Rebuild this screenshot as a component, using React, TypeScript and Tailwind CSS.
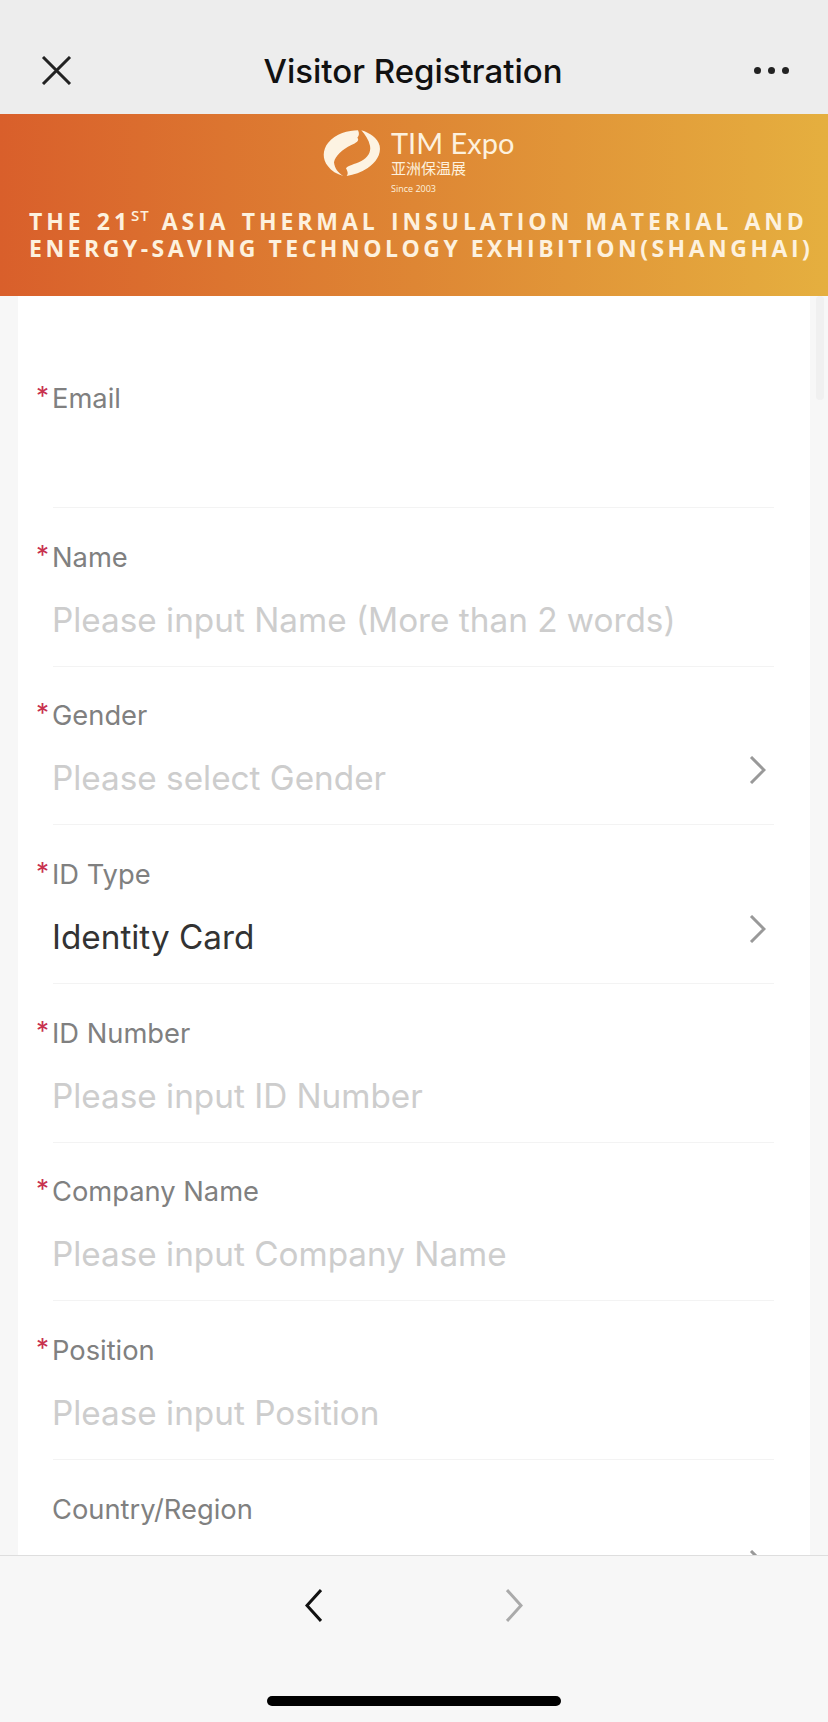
type Field = {
  label: string;
  required?: boolean;
  value?: string;
  placeholder?: string;
  select?: boolean;
};

const fields: Field[] = [
  { label: "Email", required: true },
  { label: "Name", required: true, placeholder: "Please input Name (More than 2 words)" },
  { label: "Gender", required: true, placeholder: "Please select Gender", select: true },
  { label: "ID Type", required: true, value: "Identity Card", select: true },
  { label: "ID Number", required: true, placeholder: "Please input ID Number" },
  { label: "Company Name", required: true, placeholder: "Please input Company Name" },
  { label: "Position", required: true, placeholder: "Please input Position" },
  { label: "Country/Region", select: true },
];

function Logo() {
  return (
    <svg width="60" height="48" viewBox="20 12 180 144" className="shrink-0">
      <path
        d="M128 16C100 16 60 26 38 54C22 74 20 102 38 124C48 138 64 148 84 153C68 144 58 130 56 112C60 92 80 74 108 60C122 54 134 46 126 38C132 32 132 24 128 16Z"
        fill="#fdf3e2"
      />
      <path
        d="M138 16C164 24 186 38 193 62C198 88 182 112 156 130C138 142 116 150 94 153C100 146 96 138 92 130C96 122 118 118 138 108C156 98 168 82 164 62C160 44 150 30 138 16Z"
        fill="#fdf3e2"
      />
    </svg>
  );
}

function Banner() {
  return (
    <div className="h-[182px] shrink-0 bg-gradient-to-r from-[#d95f2b] via-[#de8634] to-[#e5af3f] pt-[15px] text-[#fdf1de] font-['Open_Sans',sans-serif]">
      <div className="flex h-[79px] gap-[9px] pl-[322px]">
        <Logo />
        <div className="flex flex-col pt-[2px]">
          <div className="whitespace-nowrap text-[29px] leading-[24px] font-['Lato',sans-serif]">TIM Expo</div>
          <div className="mt-[5px] whitespace-nowrap text-[15px] leading-[16px] font-['Noto_Sans_CJK_SC',sans-serif]">
            亚洲保温展
          </div>
          <div className="mt-[7px] whitespace-nowrap text-[9px] leading-[12px]">Since 2003</div>
        </div>
      </div>
      <div className="whitespace-nowrap pl-[29px] text-[23px] leading-[27px] font-bold">
        <div className="flex h-[27px] tracking-[3.9px] [word-spacing:2.5px]">
          <span>THE 21</span>
          <span className="text-[15px] leading-[15px] font-semibold tracking-[1px]">ST</span>
          <span className="ml-[12px]">ASIA THERMAL INSULATION MATERIAL AND</span>
        </div>
        <div className="tracking-[3.5px]">ENERGY-SAVING TECHNOLOGY EXHIBITION(SHANGHAI)</div>
      </div>
    </div>
  );
}

export default function App() {
  return (
    <div className="flex h-[1722px] w-[828px] flex-col overflow-hidden bg-[#f7f7f7] font-['Inter',sans-serif]">
      <header className="flex h-[114px] shrink-0 items-center justify-between bg-[#ededed] pl-[41px] pr-[39px] pt-[27px]">
        <svg width="31" height="29" viewBox="0 0 31 29" fill="none" stroke="#222" strokeWidth="3">
          <path d="M2 1L29 28M29 1L2 28" />
        </svg>
        <h1 className="text-[33px] font-medium leading-[40px] text-[#111]">Visitor Registration</h1>
        <div className="flex gap-[7px]">
          <span className="h-[7px] w-[7px] rounded-full bg-[#222]" />
          <span className="h-[7px] w-[7px] rounded-full bg-[#222]" />
          <span className="h-[7px] w-[7px] rounded-full bg-[#222]" />
        </div>
      </header>

      <Banner />

      <main className="relative min-h-0 flex-1 overflow-hidden px-[18px]">
        <div className="h-full bg-white pt-[88px]">
          {fields.map((field) => (
            <div key={field.label} className="h-[158.7px]">
              <div className="flex h-[30px] items-center pl-[18px] text-[27.3px] leading-[30px] text-[#808080]">
                <span className="relative top-[-3px] w-[16px] text-[26px] leading-[30px] text-[#c8324e]">
                  {field.required ? "*" : ""}
                </span>
                <span>{field.label}</span>
              </div>
              <div className="mt-[26px] flex h-[42px] items-center justify-between pl-[34px] pr-[44px] text-[33.3px] leading-[42px]">
                {field.value ? (
                  <span className="text-[#333]">{field.value}</span>
                ) : (
                  <span className="text-[#cdcdcd]">{field.placeholder}</span>
                )}
                {field.select && (
                  <svg
                    width="17"
                    height="28"
                    viewBox="0 0 17 28"
                    fill="none"
                    stroke="#999"
                    strokeWidth="3"
                    className="relative top-[-8px] shrink-0"
                  >
                    <path d="M2 1L15 14L2 27" />
                  </svg>
                )}
              </div>
              <div className="ml-[35px] mr-[36px] mt-[25px] h-[1px] bg-[#f3f3f3]" />
            </div>
          ))}
        </div>
        <div className="absolute right-[4px] top-0 h-[104px] w-[8px] rounded-full bg-[#f0f0f0]" />
      </main>

      <footer className="h-[167px] shrink-0 border-t border-[#dedede] bg-[#f7f7f7]">
        <div className="flex justify-center gap-[184px] pt-[33px]">
          <svg width="17" height="33" viewBox="0 0 17 33" fill="none" stroke="#111" strokeWidth="3">
            <path d="M16 1L2 16.500L16 32" />
          </svg>
          <svg width="17" height="33" viewBox="0 0 17 33" fill="none" stroke="#aaa" strokeWidth="3">
            <path d="M1 1L15 16.500L1 32" />
          </svg>
        </div>
        <div className="mx-auto mt-[74px] h-[10px] w-[294px] rounded-full bg-black" />
      </footer>
    </div>
  );
}
